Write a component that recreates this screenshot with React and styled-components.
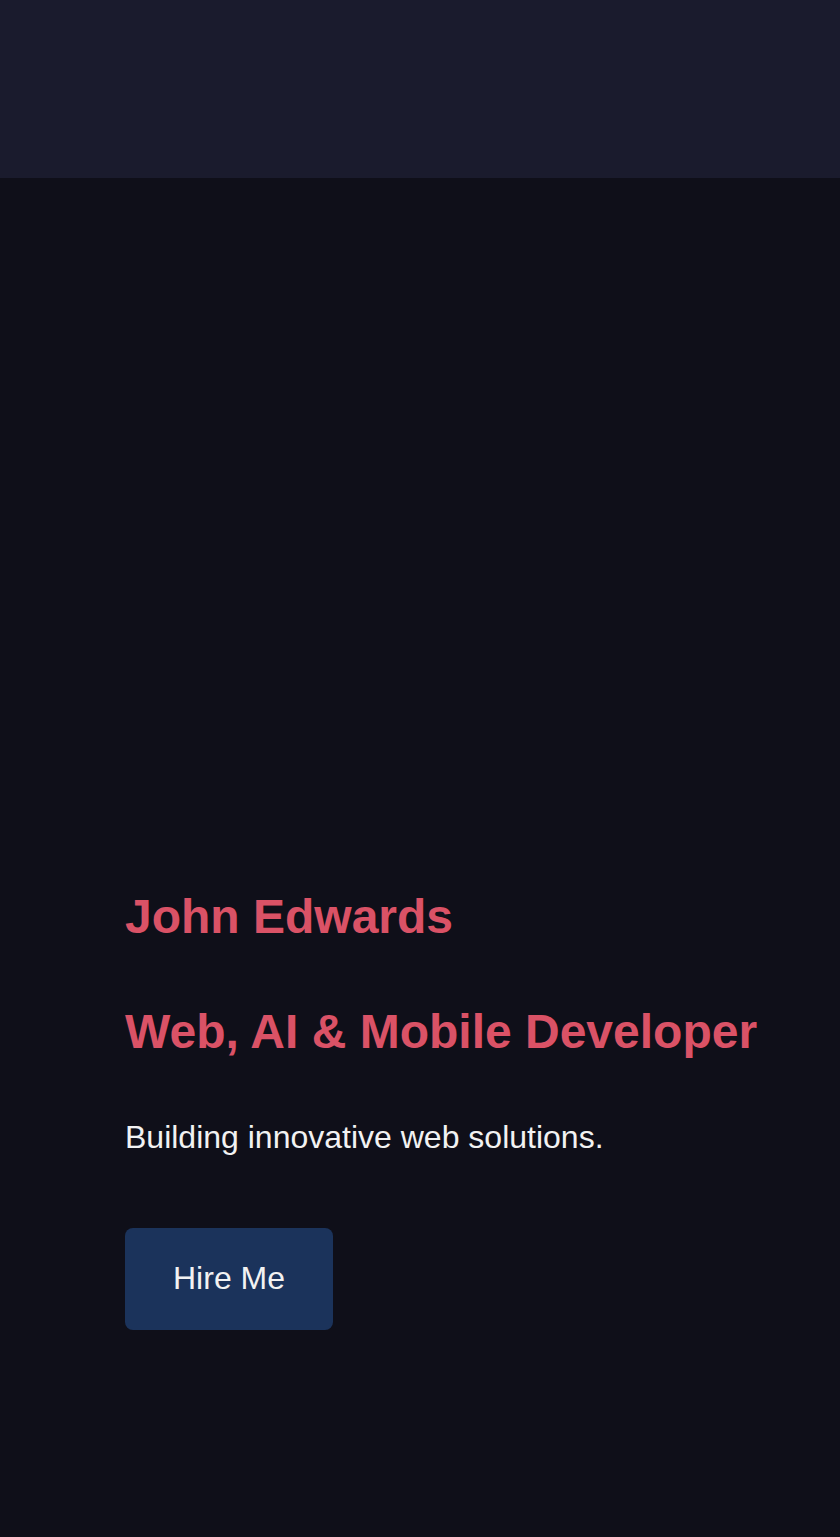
import React from "react"
import styled, { createGlobalStyle } from "styled-components"

const GlobalStyle = createGlobalStyle`
  html, body {
    margin: 0;
    padding: 0;
    background: #0f0f19;
  }
  body {
    font-family: "Liberation Sans", Arial, sans-serif;
    color: #f2f2f2;
  }
`

const Page = styled.div`
  display: flex;
  flex-direction: column;
  min-height: 1537px;
  background: #0f0f19;
`

const Header = styled.header`
  height: 178px;
  background: #1a1b2d;
`

const Hero = styled.section`
  display: flex;
  flex-direction: column;
  align-items: flex-start;
  padding: 711px 0 0 125px;
`

const Title = styled.h1`
  margin: 0 0 ${({ gap }) => gap}px;
  font-size: 48px;
  line-height: 55px;
  font-weight: 700;
  color: #da5266;
`

const Tagline = styled.p`
  margin: 0 0 72px;
  font-size: 32px;
  line-height: 37px;
  color: #f2f2f2;
`

const HireButton = styled.button`
  padding: 32px 48px 33px;
  border: none;
  border-radius: 8px;
  background: #1b335b;
  color: #f2f2f2;
  font-family: "Liberation Sans", Arial, sans-serif;
  font-size: 32px;
  line-height: 37px;
  cursor: pointer;
`

const App = () => {
  return (
    <>
      <GlobalStyle />
      <Page>
        <Header />
        <Hero>
          <Title gap={60}>John Edwards</Title>
          <Title as="h2" gap={60}>Web, AI &amp; Mobile Developer</Title>
          <Tagline>Building innovative web solutions.</Tagline>
          <HireButton>Hire Me</HireButton>
        </Hero>
      </Page>
    </>
  )
}

export default App
